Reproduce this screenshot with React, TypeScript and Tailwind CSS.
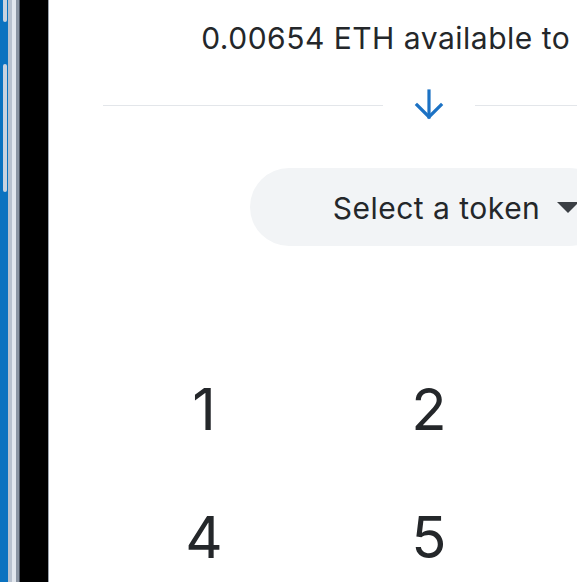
import React from 'react';

const ArrowDown = () => (
  <svg width="32" height="32" viewBox="0 0 32 32" fill="none" stroke="#1c72c4" strokeWidth="3.2" strokeLinecap="square">
    <path d="M16 2v26" />
    <path d="M4 16l12 12 12-12" />
  </svg>
);

const Bezel = () => (
  <div className="flex h-full w-[49px] shrink-0">
    <div className="relative w-[8px] bg-[#0a72c0]">
      <div className="absolute left-[3px] top-0 h-[22px] w-[4px] rounded-b-full bg-[#c9d3df]" />
      <div className="absolute left-[3px] top-[64px] h-[128px] w-[4px] rounded-full bg-[#c9d3df]" />
    </div>
    <div className="w-[4px] bg-[#b9c2cf]" />
    <div className="w-[4px] bg-[#e2e7ee]" />
    <div className="w-[3px] bg-[#8b95a3]" />
    <div className="w-[1px] bg-[#4b5360]" />
    <div className="w-[28px] bg-black" />
    <div className="w-[1px] bg-[#9ba3ad]" />
  </div>
);

const keys = ['1', '2', '3', '4', '5', '6'];

export default function App() {
  return (
    <div className="flex h-[582px] w-[577px] overflow-hidden bg-white" style={{ fontFamily: 'Inter, "Liberation Sans", sans-serif' }}>
      <Bezel />
      <div className="flex w-[760px] shrink-0 flex-col items-center text-[#24272a]">
        <p className="mt-[20px] whitespace-nowrap text-[30px] leading-[36px] tracking-[0.5px]">0.00654 ETH available to swap</p>

        <div className="mt-[33px] flex w-full items-center px-[54px]">
          <div className="h-px flex-1 bg-[#e3e6ea]" />
          <div className="flex w-[92px] justify-center">
            <ArrowDown />
          </div>
          <div className="h-px flex-1 bg-[#e3e6ea]" />
        </div>

        <div className="mt-[47px] flex h-[78px] w-[358px] items-center justify-center gap-[17px] rounded-full bg-[#f2f4f6] pl-[54px]">
          <span className="mt-[2px] whitespace-nowrap text-[30px] tracking-[0.5px]">Select a token</span>
          <svg width="22" height="11" viewBox="0 0 22 11">
            <path d="M0 0h22L11 11z" fill="#3b3f44" />
          </svg>
        </div>

        <div className="mt-[133px] grid w-[675px] grid-cols-3 gap-y-[68px] text-[58px] leading-[60px]">
          {keys.map((k) => (
            <div key={k} className="text-center">{k}</div>
          ))}
        </div>
      </div>
    </div>
  );
}
